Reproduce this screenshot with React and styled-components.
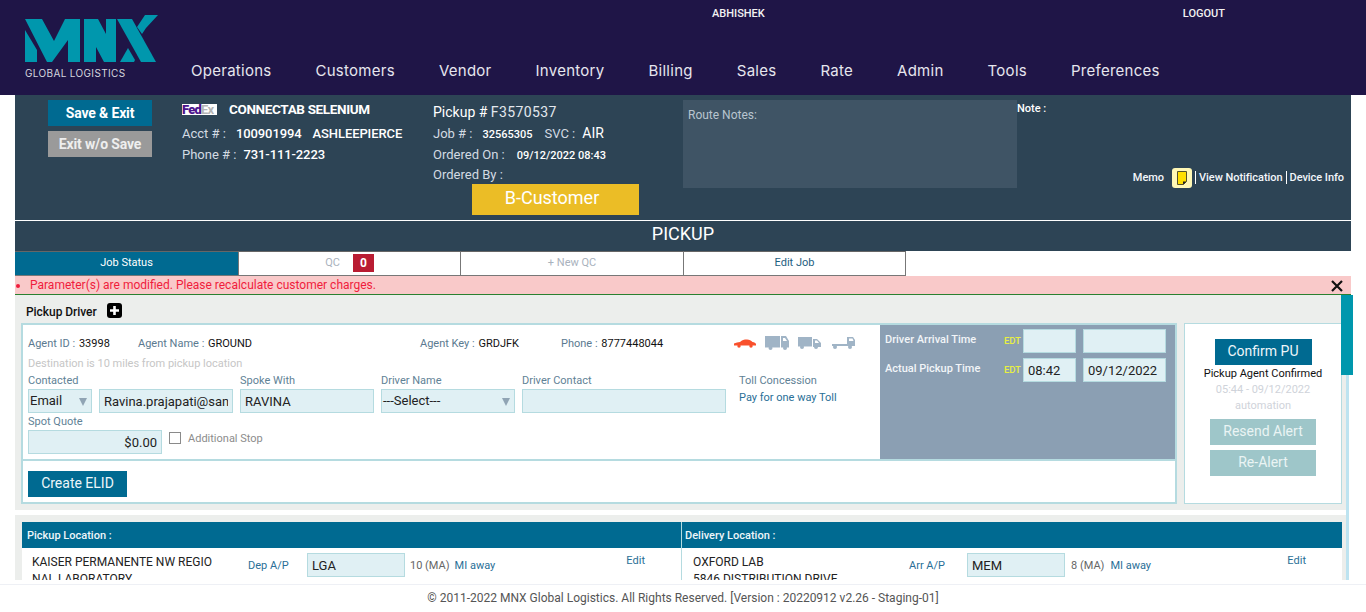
import React from 'react'
import styled, { createGlobalStyle } from 'styled-components'

const navItems = ['Operations', 'Customers', 'Vendor', 'Inventory', 'Billing', 'Sales', 'Rate', 'Admin', 'Tools', 'Preferences']

export default function App() {
    return (
        <>
            <Global />
            <Page>
                <Header>
                    <LogoBlock>
                        <MnxLogo />
                        <LogoText>GLOBAL LOGISTICS</LogoText>
                    </LogoBlock>
                    <HeaderRight>
                        <UserRow>
                            <UserName>ABHISHEK</UserName>
                            <UserName>LOGOUT</UserName>
                        </UserRow>
                        <Nav>
                            {navItems.map(item => <NavItem key={item}>{item}</NavItem>)}
                        </Nav>
                    </HeaderRight>
                </Header>
                <Content>
                    <TopPanel>
                        <ButtonCol>
                            <TopButton>Save &amp; Exit</TopButton>
                            <TopButton $muted>Exit w/o Save</TopButton>
                        </ButtonCol>
                        <CustomerCol>
                            <CustomerName>
                                <FedexMark><b>Fed</b><i>Ex</i></FedexMark>
                                CONNECTAB SELENIUM
                            </CustomerName>
                            <InfoLine>Acct # :<Strong $ml={10}>100901994</Strong><Strong $ml={11}>ASHLEEPIERCE</Strong></InfoLine>
                            <InfoLine>Phone # :<Strong $ml={7}>731-111-2223</Strong></InfoLine>
                        </CustomerCol>
                        <PickupCol>
                            <PickupNo>Pickup # <span>F3570537</span></PickupNo>
                            <InfoLine $h={21}>Job # :<SmallStrong $ml={10}>32565305</SmallStrong><Label $ml={12}>SVC :</Label><ServiceValue>AIR</ServiceValue></InfoLine>
                            <InfoLine $h={21}>Ordered On :<SmallStrong $ml={12}>09/12/2022 08:43</SmallStrong></InfoLine>
                            <InfoLine $h={20}>Ordered By :</InfoLine>
                            <CustomerType>B-Customer</CustomerType>
                        </PickupCol>
                        <RouteNotes>Route Notes:</RouteNotes>
                        <NoteCol>
                            <NoteLabel>Note :</NoteLabel>
                            <LinksRow>
                                <LinkText>Memo</LinkText>
                                <MemoIcon />
                                <LinkText $sep>View Notification</LinkText>
                                <LinkText $sep>Device Info</LinkText>
                            </LinksRow>
                        </NoteCol>
                    </TopPanel>
                    <TitleBar>PICKUP</TitleBar>
                    <Tabs>
                        <Tab $active $w={224}>Job Status</Tab>
                        <Tab $muted $w={222}>QC<QcBadge>0</QcBadge></Tab>
                        <Tab $muted $w={223}>+ New QC</Tab>
                        <Tab $link $w={222}>Edit Job</Tab>
                    </Tabs>
                    <AlertBar>
                        <AlertDot />
                        <AlertText>Parameter(s) are modified. Please recalculate customer charges.</AlertText>
                        <CloseIcon />
                    </AlertBar>
                    <ScrollArea>
                        <ScrollInner>
                            <DriverSection>
                                <SectionTitle>Pickup Driver<PlusIcon /></SectionTitle>
                                <DriverRow>
                                    <DriverBox>
                                        <DriverTop>
                                            <DriverForm>
                                                <AgentRow>
                                                    <AgentCell $w={110}><AgentLabel>Agent ID :</AgentLabel> <AgentValue>33998</AgentValue></AgentCell>
                                                    <AgentCell $w={282}><AgentLabel>Agent Name :</AgentLabel> <AgentValue>GROUND</AgentValue></AgentCell>
                                                    <AgentCell $w={141}><AgentLabel>Agent Key :</AgentLabel> <AgentValue>GRDJFK</AgentValue></AgentCell>
                                                    <AgentCell $w={173}><AgentLabel>Phone :</AgentLabel> <AgentValue>8777448044</AgentValue></AgentCell>
                                                    <VehicleIcons />
                                                </AgentRow>
                                                <Hint>Destination is 10 miles from pickup location</Hint>
                                                <FieldGrid>
                                                    <Field $w={205}>
                                                        <FieldLabel>Contacted</FieldLabel>
                                                        <ContactPair>
                                                            <SelectBox $w={64}>Email<Caret /></SelectBox>
                                                            <TextBox $w={134} readOnly value="Ravina.prajapati@sandhata.com" />
                                                        </ContactPair>
                                                    </Field>
                                                    <Field $w={134}>
                                                        <FieldLabel>Spoke With</FieldLabel>
                                                        <TextBox $w={134} readOnly value="RAVINA" />
                                                    </Field>
                                                    <Field $w={134}>
                                                        <FieldLabel>Driver Name</FieldLabel>
                                                        <SelectBox $w={134}>---Select---<Caret /></SelectBox>
                                                    </Field>
                                                    <Field $w={204}>
                                                        <FieldLabel>Driver Contact</FieldLabel>
                                                        <TextBox $w={204} readOnly value="" />
                                                    </Field>
                                                    <TollField>
                                                        <FieldLabel>Toll Concession</FieldLabel>
                                                        <TollText>Pay for one way Toll</TollText>
                                                    </TollField>
                                                </FieldGrid>
                                                <QuoteRow>
                                                    <Field $w={134}>
                                                        <SpotLabel>Spot Quote</SpotLabel>
                                                        <TextBox $w={134} $right readOnly value="$0.00" />
                                                    </Field>
                                                    <CheckRow>
                                                        <CheckBox />
                                                        <CheckLabel>Additional Stop</CheckLabel>
                                                    </CheckRow>
                                                </QuoteRow>
                                            </DriverForm>
                                            <TimePanel>
                                                <TimeRow>
                                                    <TimeLabel>Driver Arrival Time</TimeLabel>
                                                    <EdtMark>EDT</EdtMark>
                                                    <TextBox $w={53} readOnly value="" />
                                                    <TextBox $w={83} readOnly value="" />
                                                </TimeRow>
                                                <TimeRow>
                                                    <TimeLabel>Actual Pickup Time</TimeLabel>
                                                    <EdtMark>EDT</EdtMark>
                                                    <TextBox $w={53} readOnly value="08:42" />
                                                    <TextBox $w={83} readOnly value="09/12/2022" />
                                                </TimeRow>
                                            </TimePanel>
                                        </DriverTop>
                                        <ElidRow>
                                            <PrimaryButton $w={99}>Create ELID</PrimaryButton>
                                        </ElidRow>
                                    </DriverBox>
                                    <ConfirmCard>
                                        <PrimaryButton $w={97}>Confirm PU</PrimaryButton>
                                        <ConfirmText>Pickup Agent Confirmed</ConfirmText>
                                        <ConfirmMuted>05:44 - 09/12/2022</ConfirmMuted>
                                        <ConfirmMuted>automation</ConfirmMuted>
                                        <AlertButton $mt={5}>Resend Alert</AlertButton>
                                        <AlertButton $mt={5}>Re-Alert</AlertButton>
                                    </ConfirmCard>
                                </DriverRow>
                            </DriverSection>
                            <LocationSection>
                                <LocationGrid>
                                    <LocationCol>
                                        <LocationHead>Pickup Location :</LocationHead>
                                        <LocationBody>
                                            <Address $w={216}>KAISER PERMANENTE NW REGIO<br />NAL LABORATORY</Address>
                                            <AirportLabel $w={59}>Dep A/P</AirportLabel>
                                            <TextBox $w={98} readOnly value="LGA" />
                                            <Distance $ml={5}>10 (MA)</Distance>
                                            <MilesAway $ml={5}>MI away</MilesAway>
                                            <EditLink>Edit</EditLink>
                                        </LocationBody>
                                    </LocationCol>
                                    <LocationCol $second>
                                        <LocationHead $second>Delivery Location :</LocationHead>
                                        <LocationBody $second>
                                            <Address $w={216}>OXFORD LAB<br />5846 DISTRIBUTION DRIVE</Address>
                                            <AirportLabel $w={58}>Arr A/P</AirportLabel>
                                            <TextBox $w={98} readOnly value="MEM" />
                                            <Distance $ml={6}>8 (MA)</Distance>
                                            <MilesAway $ml={6}>MI away</MilesAway>
                                            <EditLink>Edit</EditLink>
                                        </LocationBody>
                                    </LocationCol>
                                </LocationGrid>
                            </LocationSection>
                        </ScrollInner>
                        <ScrollTrack><ScrollThumb /></ScrollTrack>
                    </ScrollArea>
                </Content>
                <Footer>© 2011-2022 MNX Global Logistics. All Rights Reserved. [Version : 20220912 v2.26 - Staging-01]</Footer>
            </Page>
        </>
    )
}

// logo drawn in page pixels, offset by the viewBox
function MnxLogo() {
    return (
        <svg width="134" height="48" viewBox="25 15 134 48" fill="#0097ad">
            <polygon points="25,30 37,50 37,62 25,62" />
            <polygon points="25,19 42,19 54,41 65,19 80,19 80,62 68,62 68,40 52,62 47,62" />
            <polygon points="84,19 98,19 106,34 106,19 116,19 116,62 104,62 96,47 96,62 84,62" />
            <polygon points="117,19 132,19 156,62 141,62" />
            <polygon points="120,62 128,48 135,60 134,62" />
            <polygon points="137,27 145,15 158,15 146,28 142,34" />
        </svg>
    )
}

function MemoIcon() {
    return (
        <svg width="20" height="20" viewBox="0 0 20 20">
            <rect width="20" height="20" rx="3" fill="#fff8b5" />
            <path d="M5.500 3.500h9v10l-3 3h-6z" fill="#ffdf00" stroke="#55522a" strokeWidth="1" />
            <path d="M11 16.500v-3h3.500z" fill="#222" />
        </svg>
    )
}

function PlusIcon() {
    return (
        <PlusWrap width="15" height="15" viewBox="0 0 15 15">
            <rect width="15" height="15" rx="3" fill="#000" />
            <path d="M7.500 3v9M3 7.500h9" stroke="#fff" strokeWidth="2.600" />
        </PlusWrap>
    )
}

function CloseIcon() {
    return (
        <CloseWrap width="12" height="12" viewBox="0 0 12 12">
            <path d="M1 1l10 10M11 1L1 11" stroke="#111" strokeWidth="2.200" />
        </CloseWrap>
    )
}

function VehicleIcons() {
    return (
        <Vehicles>
            <svg width="22" height="9" viewBox="0 0 22 9" fill="#f9502c">
                <path d="M0 4.500C2 3.500 4 3.500 6 3 8 1 10 .5 13 .5c2.500 0 4 1 5.500 2.500 2 .3 3 .8 3.500 2v1.500H0z" />
                <circle cx="5" cy="7" r="1.700" /><circle cx="17" cy="7" r="1.700" />
            </svg>
            <svg width="24" height="14" viewBox="0 0 24 14" fill="#a0b4c6">
                <path d="M0 0h15v11.500H0z" />
                <path d="M16 0h5l3 5v6.500h-8zM18 2v3h4l-2-3z" fillRule="evenodd" />
                <circle cx="5.500" cy="12" r="2" /><circle cx="20" cy="12" r="2" />
            </svg>
            <svg width="23" height="12" viewBox="0 0 23 12" fill="#a0b4c6">
                <path d="M0 0h14v9.500H0z" />
                <path d="M15 2h4l4 4v4h-8zM17 3.500v2.500h4l-2-2.500z" fillRule="evenodd" />
                <circle cx="4" cy="10" r="2" /><circle cx="18" cy="10" r="2" />
            </svg>
            <LastVehicle width="23" height="12" viewBox="0 0 23 12" fill="#a0b4c6">
                <path d="M0 7h15v2H0z" />
                <path d="M15 0h6l2 3v6h-8zM17 1.500v2.500h4.500l-1-2.500z" fillRule="evenodd" />
                <circle cx="3" cy="10" r="2" /><circle cx="18" cy="10" r="2" />
            </LastVehicle>
        </Vehicles>
    )
}

const Global = createGlobalStyle`
    html, body {
        margin: 0;
        padding: 0;
        background: #fff;
        overflow: hidden;
    }
    * {
        box-sizing: border-box;
    }
    body {
        font-family: Roboto, 'Liberation Sans', sans-serif;
    }
`
const Page = styled.div`
    height: 612px;
    display: flex;
    flex-direction: column;
`
const Header = styled.header`
    flex: 0 0 95px;
    display: flex;
    background: #1f1547;
    color: #fff;
`
const LogoBlock = styled.div`
    width: 191px;
    padding: 15px 0 0 25px;
    svg {
        display: block;
    }
`
const LogoText = styled.div`
    font-family: Inter, sans-serif;
    font-size: 10px;
    letter-spacing: 0.35px;
    color: #d5d5de;
    margin-top: 4px;
    line-height: 12px;
    white-space: nowrap;
`
const HeaderRight = styled.div`
    flex: 1;
    display: flex;
    flex-direction: column;
`
const UserRow = styled.div`
    display: flex;
    height: 61px;
    padding: 7px 0 0 521px;
    gap: 418px;
`
const UserName = styled.span`
    font-size: 11px;
    font-weight: 500;
    line-height: 13px;
    color: #f2f2f2;
`
const Nav = styled.nav`
    display: flex;
    gap: 44px;
`
const NavItem = styled.span`
    font-family: Inter, sans-serif;
    font-size: 15px;
    letter-spacing: 0.27px;
    line-height: 20px;
    color: #e6e6ee;
`
const Content = styled.main`
    flex: 1;
    min-height: 0;
    margin-left: 15px;
    width: 1336px;
    display: flex;
    flex-direction: column;
`
const TopPanel = styled.section`
    flex: 0 0 125px;
    display: flex;
    background: #2d4455;
    padding-top: 5px;
    color: #fff;
`
const ButtonCol = styled.div`
    width: 104px;
    margin: 0 30px 0 33px;
    display: flex;
    flex-direction: column;
    gap: 5px;
`
const TopButton = styled.div`
    height: 26px;
    background: ${props => props.$muted ? '#9a9a9a' : '#006a91'};
    color: ${props => props.$muted ? '#eee' : '#fff'};
    font-size: 14px;
    font-weight: 700;
    letter-spacing: -0.15px;
    text-align: center;
    line-height: 26px;
`
const CustomerCol = styled.div`
    width: 251px;
    font-size: 13px;
`
const CustomerName = styled.div`
    display: flex;
    align-items: center;
    height: 18px;
    font-size: 13.500px;
    font-weight: 700;
    letter-spacing: -0.35px;
    margin-bottom: 5px;
`
const FedexMark = styled.span`
    display: inline-block;
    width: 35px;
    height: 11px;
    background: #fff;
    margin-right: 12px;
    font-size: 13px;
    line-height: 11px;
    letter-spacing: -0.8px;
    white-space: nowrap;
    b {
        color: #4d148c;
    }
    i {
        font-style: normal;
        font-weight: 700;
        color: #b5b5b5;
    }
`
const InfoLine = styled.div`
    height: ${props => props.$h || 21}px;
    line-height: ${props => props.$h || 21}px;
    font-size: 13px;
    color: #d3dbe3;
    white-space: nowrap;
`
const Strong = styled.span`
    margin-left: ${props => props.$ml}px;
    color: #fff;
    font-weight: 500;
    letter-spacing: -0.1px;
`
const SmallStrong = styled(Strong)`
    font-size: 11px;
    letter-spacing: 0;
`
const Label = styled.span`
    margin-left: ${props => props.$ml}px;
`
const ServiceValue = styled.span`
    margin-left: 7px;
    color: #fff;
    font-size: 14px;
`
const PickupCol = styled.div`
    width: 250px;
    position: relative;
`
const PickupNo = styled.div`
    font-size: 14px;
    line-height: 24px;
    height: 23px;
    color: #fff;
    span {
        letter-spacing: 0.4px;
        color: #e3e8ee;
    }
`
const CustomerType = styled.div`
    width: 167px;
    height: 31px;
    margin: -1px 0 0 39px;
    padding-right: 7px;
    background: #ebbd26;
    color: #fff;
    font-size: 18px;
    line-height: 28px;
    text-align: center;
`
const RouteNotes = styled.div`
    width: 334px;
    height: 88px;
    background: #3f5465;
    color: #b8c4cf;
    font-size: 12px;
    padding: 8px 5px;
`
const NoteCol = styled.div`
    flex: 1;
    display: flex;
    flex-direction: column;
    justify-content: space-between;
    height: 88px;
    padding-top: 1px;
`
const NoteLabel = styled.div`
    font-size: 11px;
    font-weight: 500;
    line-height: 16px;
`
const LinksRow = styled.div`
    display: flex;
    align-items: center;
    justify-content: flex-end;
    padding-right: 7px;
    height: 20px;
`
const LinkText = styled.span`
    font-size: 11px;
    font-weight: 500;
    letter-spacing: -0.05px;
    color: #f2f6fa;
    line-height: 13px;
    margin-top: -2px;
    ${props => props.$sep ? 'border-left: 1px solid #fff; padding-left: 3px; margin-left: 3px;' : 'margin-right: 8px;'}
`
const TitleBar = styled.div`
    flex: 0 0 31px;
    border-top: 1px solid #fff;
    background: #2d4455;
    color: #fff;
    font-size: 18px;
    line-height: 25px;
    text-align: center;
`
const Tabs = styled.div`
    flex: 0 0 25px;
    display: flex;
    font-size: 11px;
`
const Tab = styled.div`
    width: ${props => props.$w}px;
    display: flex;
    align-items: center;
    justify-content: center;
    gap: 13px;
    padding-bottom: 2px;
    background: ${props => props.$active ? '#006a91' : '#fff'};
    color: ${props => props.$active ? '#fff' : props.$muted ? '#a9b2bd' : '#1e607f'};
    border-top: 1px solid #666;
    border-bottom: 1px solid #777;
    border-right: 1px solid #777;
`
const QcBadge = styled.span`
    width: 21px;
    height: 18px;
    background: #b91c32;
    color: #fff;
    font-size: 12px;
    font-weight: 700;
    line-height: 18px;
    text-align: center;
`
const AlertBar = styled.div`
    flex: 0 0 19px;
    display: flex;
    align-items: center;
    background: #f9c9c9;
    border-bottom: 1px solid #2a8030;
    padding-left: 1px;
    position: relative;
`
const AlertDot = styled.span`
    width: 4px;
    height: 4px;
    margin-top: 2px;
    border-radius: 50%;
    background: #f01c3c;
    margin-right: 10px;
`
const AlertText = styled.span`
    font-size: 12px;
    color: #f01c3c;
`
const CloseWrap = styled.svg`
    position: absolute;
    right: 8px;
    top: 4px;
`
const ScrollArea = styled.div`
    flex: 1;
    min-height: 0;
    position: relative;
    margin-bottom: 4px;
`
const ScrollInner = styled.div`
    width: 1331px;
    height: 100%;
    overflow: hidden;
`
const ScrollTrack = styled.div`
    position: absolute;
    top: 0;
    bottom: 0;
    left: 1331px;
    width: 3px;
    background: #bde3f0;
`
const ScrollThumb = styled.div`
    position: absolute;
    top: 0;
    left: -5px;
    width: 12px;
    height: 80px;
    background: #0097ad;
`
const DriverSection = styled.section`
    background: #eceeec;
    padding: 0 0 6px 6px;
    height: 215px;
`
const SectionTitle = styled.div`
    display: flex;
    align-items: center;
    height: 28px;
    padding: 6px 0 0 5px;
    font-size: 12px;
    font-weight: 500;
    letter-spacing: -0.05px;
    color: #111;
`
const PlusWrap = styled.svg`
    margin-left: 10px;
    margin-top: -3px;
`
const DriverRow = styled.div`
    display: flex;
    gap: 7px;
`
const DriverBox = styled.div`
    width: 1156px;
    height: 181px;
    border: 2px solid #b5dbe0;
    background: #fff;
    display: flex;
    flex-direction: column;
`
const DriverTop = styled.div`
    display: flex;
    height: 136px;
    border-bottom: 2px solid #b5dbe0;
`
const DriverForm = styled.div`
    flex: 0 0 857px;
    padding: 9px 0 0 5px;
`
const AgentRow = styled.div`
    display: flex;
    align-items: center;
    height: 18px;
`
const AgentCell = styled.div`
    width: ${props => props.$w}px;
    font-size: 11px;
    white-space: nowrap;
`
const AgentLabel = styled.span`
    color: #5b7a90;
    margin-right: 1px;
`
const AgentValue = styled.span`
    color: #111;
`
const Vehicles = styled.div`
    display: flex;
    align-items: center;
    gap: 9px;
    svg {
        display: block;
    }
`
const LastVehicle = styled.svg`
    margin-left: 2px;
`
const Hint = styled.div`
    font-size: 11px;
    line-height: 14px;
    margin-top: 5px;
    color: #c6c6c6;
`
const FieldGrid = styled.div`
    display: flex;
    gap: 7px;
    margin-top: 3px;
`
const Field = styled.div`
    width: ${props => props.$w}px;
`
const FieldLabel = styled.div`
    font-size: 11px;
    line-height: 13px;
    margin-bottom: 2px;
    color: #5f8296;
`
const SpotLabel = styled(FieldLabel)`
    line-height: 17px;
    margin-bottom: 0;
`
const ContactPair = styled.div`
    display: flex;
    gap: 7px;
`
const SelectBox = styled.div`
    width: ${props => props.$w}px;
    height: 24px;
    position: relative;
    background: #e0f0f4;
    border: 1px solid #b5dbe0;
    color: #222;
    font-size: 13px;
    line-height: 22px;
    padding-left: 1px;
`
const Caret = styled.span`
    position: absolute;
    right: 4px;
    top: 8px;
    border-left: 4px solid transparent;
    border-right: 4px solid transparent;
    border-top: 8px solid #90a4b4;
`
const TextBox = styled.input`
    display: block;
    width: ${props => props.$w}px;
    height: 24px;
    background: #e0f0f4;
    border: 1px solid #b5dbe0;
    border-radius: 0;
    outline: none;
    color: #222;
    font-family: Roboto, sans-serif;
    font-size: 13px;
    padding: 0 4px;
    text-align: ${props => props.$right ? 'right' : 'left'};
`
const TollField = styled.div`
    margin-left: 6px;
`
const TollText = styled.div`
    font-size: 11px;
    line-height: 15px;
    margin-top: 3px;
    color: #2a6f97;
`
const QuoteRow = styled.div`
    display: flex;
    gap: 7px;
`
const CheckRow = styled.div`
    display: flex;
    align-items: center;
    gap: 7px;
    height: 18px;
    margin-top: 16px;
`
const CheckBox = styled.span`
    width: 12px;
    height: 12px;
    border: 1px solid #8a8a8a;
    background: #fff;
`
const CheckLabel = styled.span`
    font-size: 11px;
    color: #8c8c8c;
`
const TimePanel = styled.div`
    flex: 1;
    background: #8b9fb3;
    padding: 4px 8px 0 5px;
    display: flex;
    flex-direction: column;
    gap: 5px;
`
const TimeRow = styled.div`
    display: flex;
    gap: 7px;
    align-items: flex-start;
`
const TimeLabel = styled.span`
    width: 119px;
    margin-right: -7px;
    font-size: 11px;
    font-weight: 500;
    line-height: 22px;
    color: #f2f5f8;
`
const EdtMark = styled.span`
    width: 16px;
    margin-right: -4px;
    font-size: 9.500px;
    font-weight: 500;
    letter-spacing: -0.2px;
    line-height: 24px;
    color: #e8f040;
`
const ElidRow = styled.div`
    padding: 10px 0 0 5px;
`
const PrimaryButton = styled.div`
    width: ${props => props.$w}px;
    height: 26px;
    background: #006a91;
    color: #eef6fa;
    font-size: 14px;
    line-height: 25px;
    text-align: center;
`
const ConfirmCard = styled.div`
    width: 158px;
    height: 181px;
    background: #fff;
    border: 1px solid #b5dbe0;
    display: flex;
    flex-direction: column;
    align-items: center;
    padding-top: 15px;
`
const ConfirmText = styled.div`
    font-size: 11px;
    line-height: 16px;
    margin-top: 1px;
    color: #111;
`
const ConfirmMuted = styled.div`
    font-size: 11px;
    line-height: 16px;
    color: #cfd3da;
`
const AlertButton = styled.div`
    margin-top: ${props => props.$mt}px;
    width: 106px;
    height: 26px;
    background: #9ec6c9;
    color: #eaf4f4;
    font-size: 14px;
    line-height: 25px;
    text-align: center;
`
const LocationSection = styled.section`
    margin-top: 5px;
    background: #eceeec;
    padding: 7px 4px 0 7px;
`
const LocationGrid = styled.div`
    display: grid;
    grid-template-columns: 660px 660px;
`
const LocationCol = styled.div`
    background: #fff;
    ${props => props.$second ? '' : 'border-right: 1px solid #b5dbe0;'}
`
const LocationHead = styled.div`
    height: 26px;
    background: #006a91;
    color: #eef6fa;
    font-size: 11px;
    font-weight: 500;
    line-height: 27px;
    padding-left: ${props => props.$second ? 3 : 5}px;
`
const LocationBody = styled.div`
    display: flex;
    align-items: flex-start;
    padding: 5px 0 0 ${props => props.$second ? 11 : 10}px;
    height: 60px;
    font-size: 11px;
`
const Address = styled.div`
    width: ${props => props.$w}px;
    padding-top: 1px;
    font-size: 12px;
    line-height: 16.500px;
    color: #222;
`
const AirportLabel = styled.span`
    width: ${props => props.$w}px;
    line-height: 26px;
    color: #2a6f97;
`
const Distance = styled.span`
    margin-left: ${props => props.$ml}px;
    line-height: 26px;
    color: #666;
`
const MilesAway = styled.span`
    margin-left: ${props => props.$ml}px;
    line-height: 26px;
    color: #2a6f97;
`
const EditLink = styled.span`
    margin-left: auto;
    margin-right: 36px;
    line-height: 15px;
    color: #2a6f97;
`
const Footer = styled.footer`
    flex: 0 0 28px;
    border-top: 1px solid #eef0f5;
    color: #555;
    font-size: 12px;
    line-height: 27px;
    text-align: center;
`
